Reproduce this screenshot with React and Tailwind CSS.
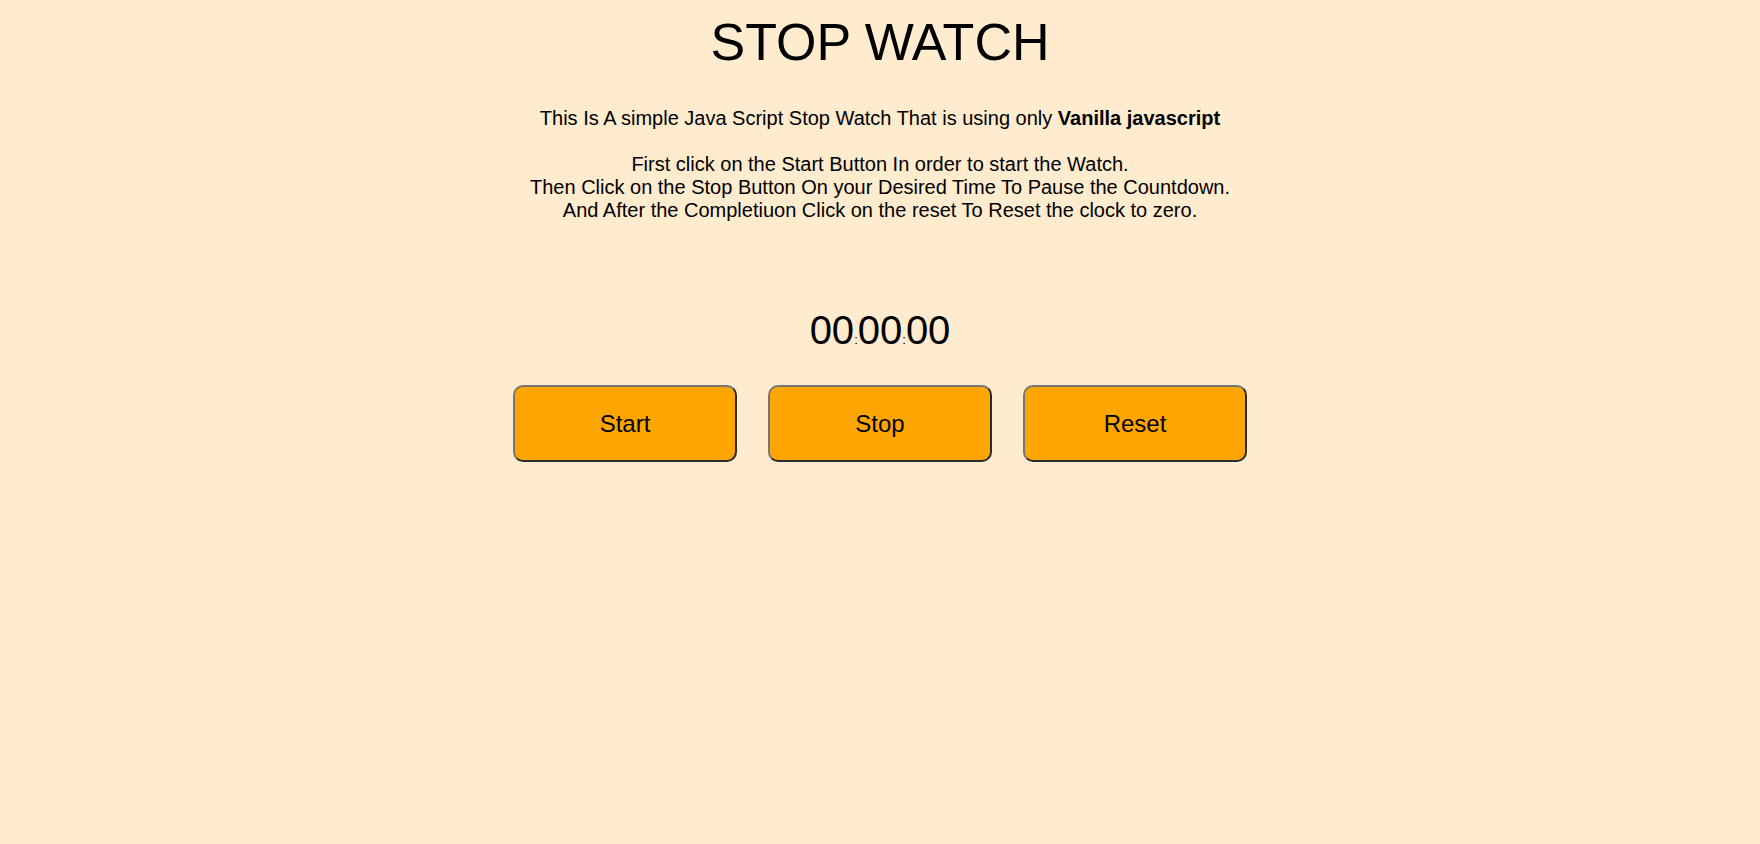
import React from 'react';

export default function App() {
  const buttons = ['Start', 'Stop', 'Reset'];

  return (
    <div className="min-h-[844px] w-full bg-[#ffebcd] text-black text-center font-['Liberation_Sans',Arial,sans-serif]">
      <h1 className="pt-[12px] text-[52px] leading-[60px] font-normal">STOP WATCH</h1>

      <p className="mt-[35px] text-[20px] leading-[23px]">
        This Is A simple Java Script Stop Watch That is using only <b>Vanilla javascript</b>
        <br />
        <br />
        First click on the Start Button In order to start the Watch.
        <br />
        Then Click on the Stop Button On your Desired Time To Pause the Countdown.
        <br />
        And After the Completiuon Click on the reset To Reset the clock to zero.
      </p>

      {/* timer readout, colons are tiny on purpose */}
      <div className="mt-[85px] text-[40px] leading-[46px]">
        00<span className="text-[13px]">:</span>00<span className="text-[13px]">:</span>00
      </div>

      <div className="mt-[22px] flex justify-center gap-[31px]">
        {buttons.map((label) => (
          <button
            key={label}
            className="w-[224px] h-[77px] rounded-[10px] bg-[#ffa500] text-[24px] border-2 border-t-[#767676] border-l-[#767676] border-r-[#2b2b2b] border-b-[#2b2b2b] cursor-pointer"
          >
            {label}
          </button>
        ))}
      </div>
    </div>
  );
}
